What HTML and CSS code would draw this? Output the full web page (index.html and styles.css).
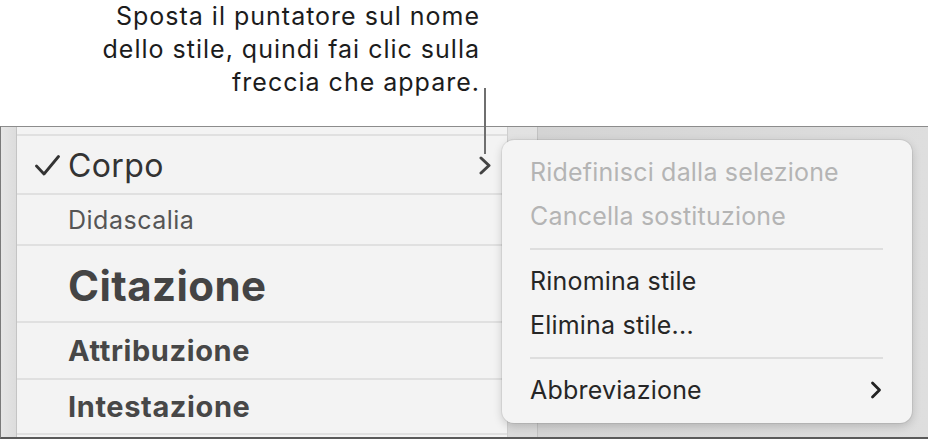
FILE: index.html
```html
<!DOCTYPE html>
<html lang="it">
<head>
<meta charset="utf-8">
<title>Stili paragrafo</title>
<link rel="stylesheet" href="styles.css">
</head>
<body>
<div class="caption">
  <p>Sposta il puntatore sul nome<br>dello stile, quindi fai clic sulla<br>freccia che appare.</p>
</div>
<div class="leader"></div>
<div class="window">
  <div class="gutter"></div>
  <div class="panel">
    <div class="row row-corpo">
      <span class="mark"><svg width="25" height="21" viewBox="0 0 25 21"><polyline points="1.5,11 9,19 23.5,1.5" fill="none" stroke="#333" stroke-width="2.8" stroke-linecap="round" stroke-linejoin="round"/></svg></span>
      <span class="name">Corpo</span>
      <span class="arrow"><svg width="12" height="19" viewBox="0 0 12 19"><polyline points="2,2 10,9.5 2,17" fill="none" stroke="#444" stroke-width="3" stroke-linecap="round" stroke-linejoin="round"/></svg></span>
    </div>
    <div class="row row-didascalia"><span class="mark"></span><span class="name">Didascalia</span></div>
    <div class="row row-citazione"><span class="mark"></span><span class="name">Citazione</span></div>
    <div class="row row-attribuzione"><span class="mark"></span><span class="name">Attribuzione</span></div>
    <div class="row row-intestazione"><span class="mark"></span><span class="name">Intestazione</span></div>
  </div>
  <div class="strip"></div>
  <div class="rest"></div>
</div>
<div class="menu">
  <div class="item disabled">Ridefinisci dalla selezione</div>
  <div class="item disabled">Cancella sostituzione</div>
  <div class="sep"></div>
  <div class="item">Rinomina stile</div>
  <div class="item">Elimina stile...</div>
  <div class="sep"></div>
  <div class="item submenu"><span>Abbreviazione</span><svg width="12" height="18" viewBox="0 0 12 18"><polyline points="2.5,2 9.5,9 2.5,16" fill="none" stroke="#222" stroke-width="2.8" stroke-linecap="round" stroke-linejoin="round"/></svg></div>
</div>
</body>
</html>
```
FILE: styles.css
```css
* { box-sizing: border-box; }
html, body { margin: 0; padding: 0; }
body {
  width: 928px;
  height: 439px;
  overflow: hidden;
  background: #ffffff;
  font-family: Inter, "Noto Sans", "Liberation Sans", sans-serif;
  position: relative;
}
.caption {
  height: 126px;
  padding-right: 448px;
  text-align: right;
}
.caption p {
  margin: 0;
  font-size: 25px;
  line-height: 33px;
  letter-spacing: 1px;
  color: #1c1c1c;
}
.leader {
  position: absolute;
  left: 484px;
  top: 88px;
  width: 2px;
  height: 66px;
  background: #6f6f6f;
}
.window {
  height: 313px;
  display: flex;
  border-top: 1px solid #8c8c8c;
  border-left: 1px solid #7a7a7a;
  border-bottom: 2px solid #5a5a5a;
}
.gutter {
  width: 16px;
  flex: none;
  background: linear-gradient(to right, #e6e6e6, #dcdcdc);
  border-right: 1px solid #c4c4c4;
}
.panel {
  width: 491px;
  flex: none;
  background: #f3f3f3;
  padding-top: 7px;
  border-right: 1px solid #cfcfcf;
}
.row {
  display: flex;
  align-items: center;
  border-top: 2px solid #e0e0e0;
  color: #444;
}
.row:last-child { border-bottom: 2px solid #e0e0e0; }
.mark {
  width: 51px;
  flex: none;
  display: flex;
  justify-content: flex-end;
  padding-right: 8px;
}
.name { flex: 1; }
.arrow { padding-right: 16px; display: flex; }
.row-corpo { height: 59px; font-size: 32px; letter-spacing: 0.4px; color: #333; padding-top: 2px; }
.row-didascalia { height: 51px; font-size: 25px; letter-spacing: 0.5px; color: #555; }
.row-citazione { height: 77px; font-size: 42px; letter-spacing: 0.4px; font-weight: 700; color: #444; padding-top: 4px; }
.row-attribuzione { height: 57px; font-size: 29px; letter-spacing: 0.6px; font-weight: 700; color: #474747; }
.row-intestazione { height: 57px; font-size: 29px; letter-spacing: 0.6px; font-weight: 700; color: #474747; }
.strip {
  width: 30px;
  flex: none;
  background: linear-gradient(to bottom, #e2e2e2, #dadada);
  border-right: 1px solid #c2c2c2;
}
.rest {
  flex: 1;
  background: linear-gradient(to right, #d4d4d4, #dedede);
}
.menu {
  position: absolute;
  left: 502px;
  top: 140px;
  width: 410px;
  height: 283px;
  background: #f4f4f4;
  border-radius: 12px;
  padding: 10px 0;
  box-shadow: 0 0 0 1px rgba(0,0,0,0.06), 0 3px 10px rgba(0,0,0,0.18);
}
.item {
  height: 44px;
  display: flex;
  align-items: center;
  padding: 0 30px 0 28px;
  font-size: 25px;
  letter-spacing: 0.2px;
  color: #262626;
}
.item.disabled { color: #b4b4b4; }
.submenu { justify-content: space-between; }
.sep {
  height: 21px;
  margin: 0 29px 0 28px;
  display: flex;
  align-items: center;
}
.sep::before {
  content: "";
  display: block;
  width: 100%;
  height: 2px;
  background: #dedede;
}
```
